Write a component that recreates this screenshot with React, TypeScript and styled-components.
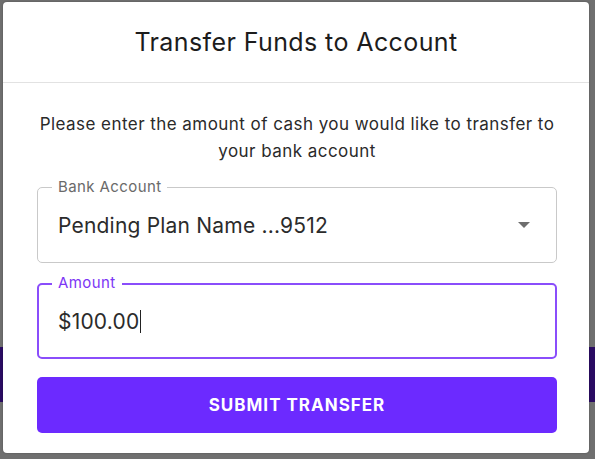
import React from "react";
import styled, { createGlobalStyle } from "styled-components";

const Global = createGlobalStyle`
  html, body { margin: 0; padding: 0; }
  body { font-family: Inter, "Liberation Sans", sans-serif; background: #6f6f6f; }
`;

const Backdrop = styled.div`
  width: 595px;
  height: 459px;
  box-sizing: border-box;
  padding: 2px 6px 6px 3px;
  background:
    linear-gradient(to bottom, transparent 347px, #2a0b62 347px, #2a0b62 402px, transparent 402px),
    #6f6f6f;
  display: flex;
`;

const Dialog = styled.div`
  flex: 1;
  background: #ffffff;
  border-radius: 4px;
  display: flex;
  flex-direction: column;
  box-shadow: 0 0 2px rgba(0, 0, 0, 0.3);
`;

const Header = styled.h2`
  margin: 0;
  height: 80px;
  display: flex;
  align-items: center;
  justify-content: center;
  font-size: 25px;
  font-weight: 400;
  color: #1c1c1c;
  border-bottom: 1px solid #e2e2e2;
  letter-spacing: 0.4px;
`;

const Body = styled.div`
  padding: 28px 32px 0 34px;
  display: flex;
  flex-direction: column;
  gap: 20px;
`;

const Description = styled.p`
  margin: 0 0 2px;
  text-align: center;
  font-size: 17px;
  line-height: 27px;
  letter-spacing: 0.45px;
  color: #2a2a2a;
`;

const Field = styled.div<{ $focused?: boolean }>`
  position: relative;
  height: 76px;
  box-sizing: border-box;
  padding: 0 ${(p) => (p.$focused ? "19px" : "20px")};
  border: ${(p) => (p.$focused ? "2px solid #8a4dfb" : "1px solid #c9c9c9")};
  border-radius: 5px;
  display: flex;
  align-items: center;
`;

const Label = styled.span<{ $focused?: boolean }>`
  position: absolute;
  top: ${(p) => (p.$focused ? "-10px" : "-9px")};
  left: ${(p) => (p.$focused ? "13px" : "14px")};
  padding: 0 6px;
  background: #ffffff;
  font-size: 15px;
  line-height: 16px;
  letter-spacing: 0.4px;
  color: ${(p) => (p.$focused ? "#7c36f5" : "#6a6a6a")};
`;

const Value = styled.span`
  flex: 1;
  font-size: 21px;
  letter-spacing: 0.2px;
  color: #2b2b2b;
  display: flex;
  align-items: center;
`;

const Caret = styled.span`
  display: inline-block;
  width: 1px;
  height: 23px;
  background: #222;
  margin-left: 1px;
`;

const Arrow = styled.svg`
  width: 14px;
  height: 8px;
  margin-right: 5px;
`;

const Button = styled.button`
  height: 56px;
  margin-top: -2px;
  border: none;
  border-radius: 5px;
  background: #6c2aff;
  color: #ffffff;
  font-family: Inter, "Liberation Sans", sans-serif;
  font-size: 17px;
  font-weight: 700;
  letter-spacing: 1px;
  cursor: pointer;
`;

export default function App() {
  return (
    <>
      <Global />
      <Backdrop>
        <Dialog>
          <Header>Transfer Funds to Account</Header>
          <Body>
            <Description>
              Please enter the amount of cash you would like to transfer to
              <br />
              your bank account
            </Description>
            <Field>
              <Label>Bank Account</Label>
              <Value>Pending Plan Name ...9512</Value>
              <Arrow viewBox="0 0 14 8">
                <path d="M1 1 L7 7 L13 1 Z" fill="#6e6e6e" />
              </Arrow>
            </Field>
            <Field $focused>
              <Label $focused>Amount</Label>
              <Value>
                $100.00
                <Caret />
              </Value>
            </Field>
            <Button>SUBMIT TRANSFER</Button>
          </Body>
        </Dialog>
      </Backdrop>
    </>
  );
}
